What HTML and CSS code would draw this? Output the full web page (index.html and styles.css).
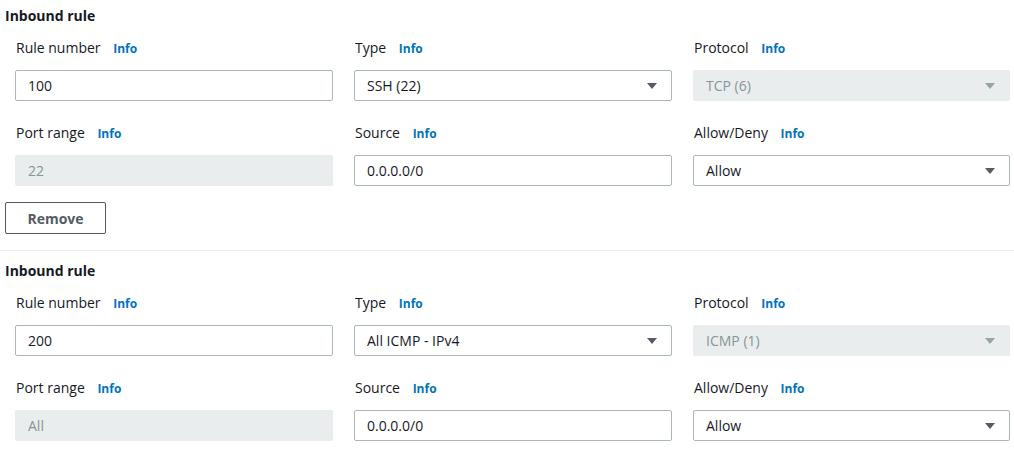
FILE: index.html
```html
<!DOCTYPE html>
<html>
<head>
<meta charset="utf-8">
<link rel="stylesheet" href="styles.css">
</head>
<body>
<div class="rules">
  <section class="rule">
    <h3 class="rule-title">Inbound rule</h3>
    <div class="grid">
      <div class="field">
        <div class="label">Rule number <span class="info">Info</span></div>
        <div class="control"><span>100</span></div>
      </div>
      <div class="field">
        <div class="label">Type <span class="info">Info</span></div>
        <div class="control select"><span>SSH (22)</span><svg class="caret" width="10" height="6" viewBox="0 0 10 6"><polygon points="0,0 10,0 5,6"/></svg></div>
      </div>
      <div class="field">
        <div class="label">Protocol <span class="info">Info</span></div>
        <div class="control select disabled"><span>TCP (6)</span><svg class="caret" width="10" height="6" viewBox="0 0 10 6"><polygon points="0,0 10,0 5,6"/></svg></div>
      </div>
      <div class="field">
        <div class="label">Port range <span class="info">Info</span></div>
        <div class="control disabled"><span>22</span></div>
      </div>
      <div class="field">
        <div class="label">Source <span class="info">Info</span></div>
        <div class="control"><span>0.0.0.0/0</span></div>
      </div>
      <div class="field">
        <div class="label">Allow/Deny <span class="info">Info</span></div>
        <div class="control select"><span>Allow</span><svg class="caret" width="10" height="6" viewBox="0 0 10 6"><polygon points="0,0 10,0 5,6"/></svg></div>
      </div>
    </div>
    <button class="btn">Remove</button>
  </section>
  <section class="rule second">
    <h3 class="rule-title">Inbound rule</h3>
    <div class="grid">
      <div class="field">
        <div class="label">Rule number <span class="info">Info</span></div>
        <div class="control"><span>200</span></div>
      </div>
      <div class="field">
        <div class="label">Type <span class="info">Info</span></div>
        <div class="control select"><span>All ICMP - IPv4</span><svg class="caret" width="10" height="6" viewBox="0 0 10 6"><polygon points="0,0 10,0 5,6"/></svg></div>
      </div>
      <div class="field">
        <div class="label">Protocol <span class="info">Info</span></div>
        <div class="control select disabled"><span>ICMP (1)</span><svg class="caret" width="10" height="6" viewBox="0 0 10 6"><polygon points="0,0 10,0 5,6"/></svg></div>
      </div>
      <div class="field">
        <div class="label">Port range <span class="info">Info</span></div>
        <div class="control disabled"><span>All</span></div>
      </div>
      <div class="field">
        <div class="label">Source <span class="info">Info</span></div>
        <div class="control"><span>0.0.0.0/0</span></div>
      </div>
      <div class="field">
        <div class="label">Allow/Deny <span class="info">Info</span></div>
        <div class="control select"><span>Allow</span><svg class="caret" width="10" height="6" viewBox="0 0 10 6"><polygon points="0,0 10,0 5,6"/></svg></div>
      </div>
    </div>
  </section>
</div>
</body>
</html>
```
FILE: styles.css
```css
* { box-sizing: border-box; }
html, body {
  margin: 0;
  padding: 0;
  background: #ffffff;
}
body {
  font-family: "Open Sans", "Noto Sans", sans-serif;
  font-size: 14px;
  color: #16191f;
  overflow: hidden;
}
.rules {
  display: flex;
  flex-direction: column;
}
.rule {
  padding: 6px 0 16px 5px;
}
.rule.second {
  border-top: 1px solid #eaeded;
  padding-top: 10px;
  padding-bottom: 0;
}
.rule-title {
  margin: 0 0 11px 0;
  font-size: 14px;
  line-height: 20px;
  font-weight: 700;
  color: #16191f;
}
.grid {
  display: grid;
  grid-template-columns: 318px 318px 317px;
  column-gap: 21px;
  row-gap: 21px;
  padding: 0 0 0 10px;
}
.field {
  display: flex;
  flex-direction: column;
}
.label {
  height: 22px;
  line-height: 22px;
  margin-bottom: 11px;
  padding-left: 1px;
  color: #16191f;
  white-space: nowrap;
}
.info {
  margin-left: 9px;
  font-size: 12px;
  line-height: 12px;
  font-weight: 700;
  color: #0073bb;
}
.control {
  height: 31px;
  border: 1px solid #aab7b8;
  border-radius: 2px;
  padding: 0 12px;
  display: flex;
  align-items: center;
  justify-content: space-between;
  line-height: 29px;
  color: #16191f;
}
.control.select {
  padding-right: 14px;
}
.caret {
  fill: #545b64;
  flex: none;
}
.control.disabled {
  background: #eaeded;
  border-color: #eaeded;
  color: #879596;
}
.control.disabled .caret {
  fill: #95a5a6;
}
.btn {
  display: flex;
  align-items: center;
  justify-content: center;
  margin-top: 16px;
  width: 101px;
  height: 32px;
  border: 1px solid #545b64;
  border-radius: 2px;
  background: #ffffff;
  font-family: "Open Sans", "Noto Sans", sans-serif;
  font-size: 14px;
  font-weight: 700;
  color: #545b64;
  padding: 0;
}
```
